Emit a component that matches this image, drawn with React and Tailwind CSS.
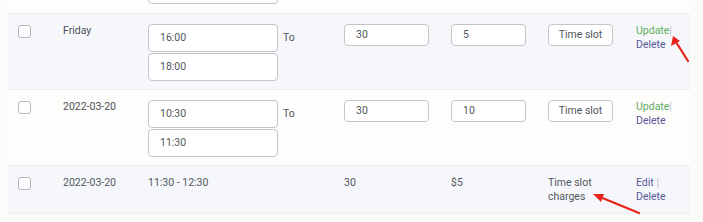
import React from "react";

const font = { fontFamily: "Roboto, 'Noto Sans', sans-serif" };

function Checkbox() {
  return <div className="mt-[1px] h-[13px] w-[13px] rounded-[3px] border border-[#b5b8bd] bg-white" />;
}

function Box({ w, h, children, center }) {
  return (
    <div
      className={`flex items-center rounded-[4px] border border-[#c3c5c9] bg-white text-[#50575e] ${center ? "justify-center" : "pl-[11px]"}`}
      style={{ width: w, height: h }}
    >
      {children}
    </div>
  );
}

function EditRow({ bg, date, from, to, dur, charge }) {
  return (
    <div className={`flex h-[76px] border-b border-[#eeeef0] pl-[10px] pt-[10px] ${bg}`}>
      <div className="w-[45px]"><Checkbox /></div>
      <div className="w-[85px] leading-[14px] text-[#4f5058]">{date}</div>
      <div className="flex w-[196px] items-start">
        <div className="flex flex-col gap-[1px]">
          <Box w={130} h={28}>{from}</Box>
          <Box w={130} h={28}>{to}</Box>
        </div>
        <div className="ml-[5px] flex h-[28px] items-center text-[#50575e]">To</div>
      </div>
      <div className="w-[107px]"><Box w={85} h={22}>{dur}</Box></div>
      <div className="w-[97px]"><Box w={75} h={22}>{charge}</Box></div>
      <div className="w-[88px]"><Box w={65} h={22} center>Time slot</Box></div>
      <div className="leading-[14px]">
        <div><span className="text-[#5fae5f]">Update</span><span className="text-[#b9b9c0]">|</span></div>
        <div className="text-[#58589a]">Delete</div>
      </div>
    </div>
  );
}

export default function App() {
  return (
    <div className="relative h-[222px] w-[703px] overflow-hidden bg-[#fbfbf9] text-[10.5px]" style={font}>
      <div className="ml-[8px] w-[682px]">
        <div className="h-[14px] overflow-hidden border-b border-[#eeeef0] bg-[#fdfdfc] pl-[140px]">
          <div className="mt-[-24px]"><Box w={130} h={28} /></div>
        </div>
        <EditRow bg="bg-[#f6f7fb]" date="Friday" from="16:00" to="18:00" dur="30" charge="5" />
        <EditRow bg="bg-[#fdfdfc]" date="2022-03-20" from="10:30" to="11:30" dur="30" charge="10" />
        <div className="flex h-[48px] border-b border-[#eeeef0] bg-[#f6f7fb] pl-[10px] pt-[10px] leading-[14px] text-[#50575e]">
          <div className="w-[45px]"><Checkbox /></div>
          <div className="w-[85px]">2022-03-20</div>
          <div className="w-[196px]">11:30 - 12:30</div>
          <div className="w-[107px]">30</div>
          <div className="w-[97px]">$5</div>
          <div className="w-[88px]">Time slot<br />charges</div>
          <div>
            <div className="text-[#58589a]">Edit<span className="text-[#b9b9c0]"> |</span></div>
            <div className="text-[#58589a]">Delete</div>
          </div>
        </div>
      </div>
      <svg className="pointer-events-none absolute left-0 top-0" width="703" height="222">
        <g stroke="#e8231b" strokeWidth="2.2" fill="#e8231b" strokeLinecap="round">
          <line x1="688" y1="61" x2="676" y2="42" />
          <polygon points="673,36 671,46 680,41" stroke="none" />
          <line x1="639" y1="213" x2="600" y2="197" />
          <polygon points="593,194 601,202 604,194" stroke="none" />
        </g>
      </svg>
    </div>
  );
}
